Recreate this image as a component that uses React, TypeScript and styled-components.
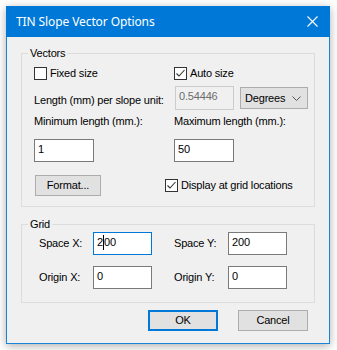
import React from 'react';
import styled, { createGlobalStyle } from 'styled-components';

const GlobalStyle = createGlobalStyle`
	html, body {
		margin: 0;
		padding: 0;
		background: #ffffff;
	}
	body {
		font-family: 'Liberation Sans', Arial, sans-serif;
		font-size: 11px;
		letter-spacing: -0.18px;
		color: #000000;
	}
`;

function CheckMark() {
	return (
		<svg width='11' height='11' viewBox='0 0 11 11'>
			<polyline points='1.5,5.5 4,8 9.5,2' fill='none' stroke='#333333' strokeWidth='1.1' />
		</svg>
	);
}

function CloseIcon() {
	return (
		<svg width='11' height='11' viewBox='0 0 11 11'>
			<path d='M0.5 0.5 L10.5 10.5 M10.5 0.5 L0.5 10.5' stroke='#ffffff' strokeWidth='1.1' />
		</svg>
	);
}

function Chevron() {
	return (
		<svg width='9' height='5' viewBox='0 0 9 5'>
			<polyline points='0.5,0.5 4.5,4.5 8.5,0.5' fill='none' stroke='#555555' strokeWidth='1' />
		</svg>
	);
}

export default function App() {
	return (
		<>
			<GlobalStyle />
			<Screen>
				<DialogWindow>
					<TitleBar>
						<TitleText>TIN Slope Vector Options</TitleText>
						<CloseButton>
							<CloseIcon />
						</CloseButton>
					</TitleBar>

					<DialogBody>
						<Group $top={10}>
							<Legend>Vectors</Legend>
							<GroupInner $pad={10}>
								<VRow $top={7} $height={13}>
									<CheckOption>
										<CheckBox />
										<span>Fixed size</span>
									</CheckOption>
									<CheckOption>
										<CheckBox>
											<CheckMark />
										</CheckBox>
										<span>Auto size</span>
									</CheckOption>
								</VRow>

								<VRow $top={6} $height={24}>
									<Label $shift={4}>Length (mm) per slope unit:</Label>
									<Cell $left={1}>
										<TextBox $width={59} $height={24} $disabled>
											0.54446
										</TextBox>
										<Dropdown>
											<span>Degrees</span>
											<Chevron />
										</Dropdown>
									</Cell>
								</VRow>

								<VRow $top={5} $height={13}>
									<Label>Minimum length (mm.):</Label>
									<Label>Maximum length (mm.):</Label>
								</VRow>

								<VRow $top={11} $height={23}>
									<TextBox $width={60}>1</TextBox>
									<TextBox $width={60}>50</TextBox>
								</VRow>

								<VRow $top={13} $height={21}>
									<Cell $left={1}>
										<PushButton $width={66}>Format...</PushButton>
									</Cell>
									<Cell $left={-9}>
										<CheckOption>
											<CheckBox>
												<CheckMark />
											</CheckBox>
											<span>Display at grid locations</span>
										</CheckOption>
									</Cell>
								</VRow>
							</GroupInner>
						</Group>

						<Group $top={11}>
							<Legend>Grid</Legend>
							<GroupInner $pad={13}>
								<GridRow $top={1}>
									<Label>Space X:</Label>
									<TextBox $width={59} $focused>
										2<Caret />00
									</TextBox>
									<span />
									<Label>Space Y:</Label>
									<TextBox $width={59}>200</TextBox>
								</GridRow>
								<GridRow $top={11}>
									<Label>Origin X:</Label>
									<TextBox $width={59}>0</TextBox>
									<span />
									<Label>Origin Y:</Label>
									<TextBox $width={59}>0</TextBox>
								</GridRow>
							</GroupInner>
						</Group>

						<ButtonBar>
							<PushButton $width={70} $default>
								OK
							</PushButton>
							<PushButton $width={70}>Cancel</PushButton>
						</ButtonBar>
					</DialogBody>
				</DialogWindow>
			</Screen>
		</>
	);
}

const Screen = styled.div`
	width: 337px;
	height: 350px;
	padding: 6px;
	box-sizing: border-box;
`;

const DialogWindow = styled.div`
	width: 324px;
	height: 338px;
	box-sizing: border-box;
	border: 1px solid #1883d7;
	border-top: none;
	background: #f0f0f0;
	box-shadow: 0 2px 9px rgba(0, 0, 0, 0.32);
	display: flex;
	flex-direction: column;
`;

const TitleBar = styled.div`
	height: 31px;
	margin: 0 -1px;
	background: #0078d7;
	display: flex;
	align-items: center;
	justify-content: space-between;
	padding: 0 12px 0 10px;
	flex-shrink: 0;
`;

const TitleText = styled.span`
	font-family: 'Noto Sans', 'Open Sans', sans-serif;
	font-size: 12px;
	letter-spacing: -0.1px;
	color: #ffffff;
	margin-top: -1px;
`;

const CloseButton = styled.div`
	width: 11px;
	height: 11px;
	display: flex;
	margin-top: -1px;
`;

const DialogBody = styled.div`
	display: flex;
	flex-direction: column;
	padding: 0 14px;
`;

const Group = styled.fieldset<{ $top: number }>`
	margin: ${(p) => p.$top}px 0 0 0;
	padding: 0;
	border: 1px solid #dcdcdc;
	min-width: 0;
`;

const Legend = styled.legend`
	margin-left: 6px;
	padding: 0 2px;
	line-height: 13px;
	font-size: 11px;
`;

const GroupInner = styled.div<{ $pad: number }>`
	display: flex;
	flex-direction: column;
	padding: 0 0 ${(p) => p.$pad}px 12px;
`;

const VRow = styled.div<{ $top: number; $height: number }>`
	display: grid;
	grid-template-columns: 140px auto;
	align-items: center;
	margin-top: ${(p) => p.$top}px;
	height: ${(p) => p.$height}px;
`;

const GridRow = styled.div<{ $top: number }>`
	display: grid;
	grid-template-columns: 54px 59px 22px 54px 59px;
	align-items: center;
	height: 23px;
	margin-top: ${(p) => p.$top}px;
	padding-left: 5px;
`;

const Cell = styled.div<{ $left: number }>`
	display: flex;
	align-items: center;
	gap: 6px;
	margin-left: ${(p) => p.$left}px;
`;

const Label = styled.span<{ $shift?: number }>`
	line-height: 13px;
	white-space: nowrap;
	margin-top: ${(p) => p.$shift ?? 0}px;
`;

const CheckOption = styled.label`
	display: flex;
	align-items: center;
	gap: 3px;
	line-height: 13px;
	white-space: nowrap;
`;

const CheckBox = styled.span`
	width: 13px;
	height: 13px;
	box-sizing: border-box;
	border: 1px solid #333333;
	background: #ffffff;
	display: flex;
	align-items: center;
	justify-content: center;
	flex-shrink: 0;
`;

const TextBox = styled.div<{ $width: number; $height?: number; $disabled?: boolean; $focused?: boolean }>`
	width: ${(p) => p.$width}px;
	height: ${(p) => p.$height ?? 23}px;
	box-sizing: border-box;
	border: 1px solid ${(p) => (p.$focused ? '#0078d7' : p.$disabled ? '#cccccc' : '#7a7a7a')};
	background: ${(p) => (p.$disabled ? '#f0f0f0' : '#ffffff')};
	color: ${(p) => (p.$disabled ? '#6d6d6d' : '#000000')};
	padding: 3px 0 0 3px;
	line-height: 13px;
	display: flex;
	align-items: flex-start;
	white-space: nowrap;
`;

const Caret = styled.span`
	display: inline-block;
	width: 1px;
	height: 15px;
	margin-top: -1px;
	background: #000000;
`;

const Dropdown = styled.div`
	width: 68px;
	height: 22px;
	box-sizing: border-box;
	border: 1px solid #adadad;
	background: #e1e1e1;
	display: flex;
	align-items: center;
	justify-content: space-between;
	padding: 0 6px 0 4px;
	line-height: 13px;
`;

const PushButton = styled.div<{ $width: number; $default?: boolean }>`
	width: ${(p) => p.$width}px;
	height: 21px;
	box-sizing: border-box;
	border: ${(p) => (p.$default ? '2px solid #0078d7' : '1px solid #adadad')};
	background: #e1e1e1;
	display: flex;
	align-items: center;
	justify-content: center;
	line-height: 13px;
`;

const ButtonBar = styled.div`
	display: flex;
	justify-content: flex-end;
	gap: 20px;
	margin-top: 7px;
	padding-right: 7px;
`;
